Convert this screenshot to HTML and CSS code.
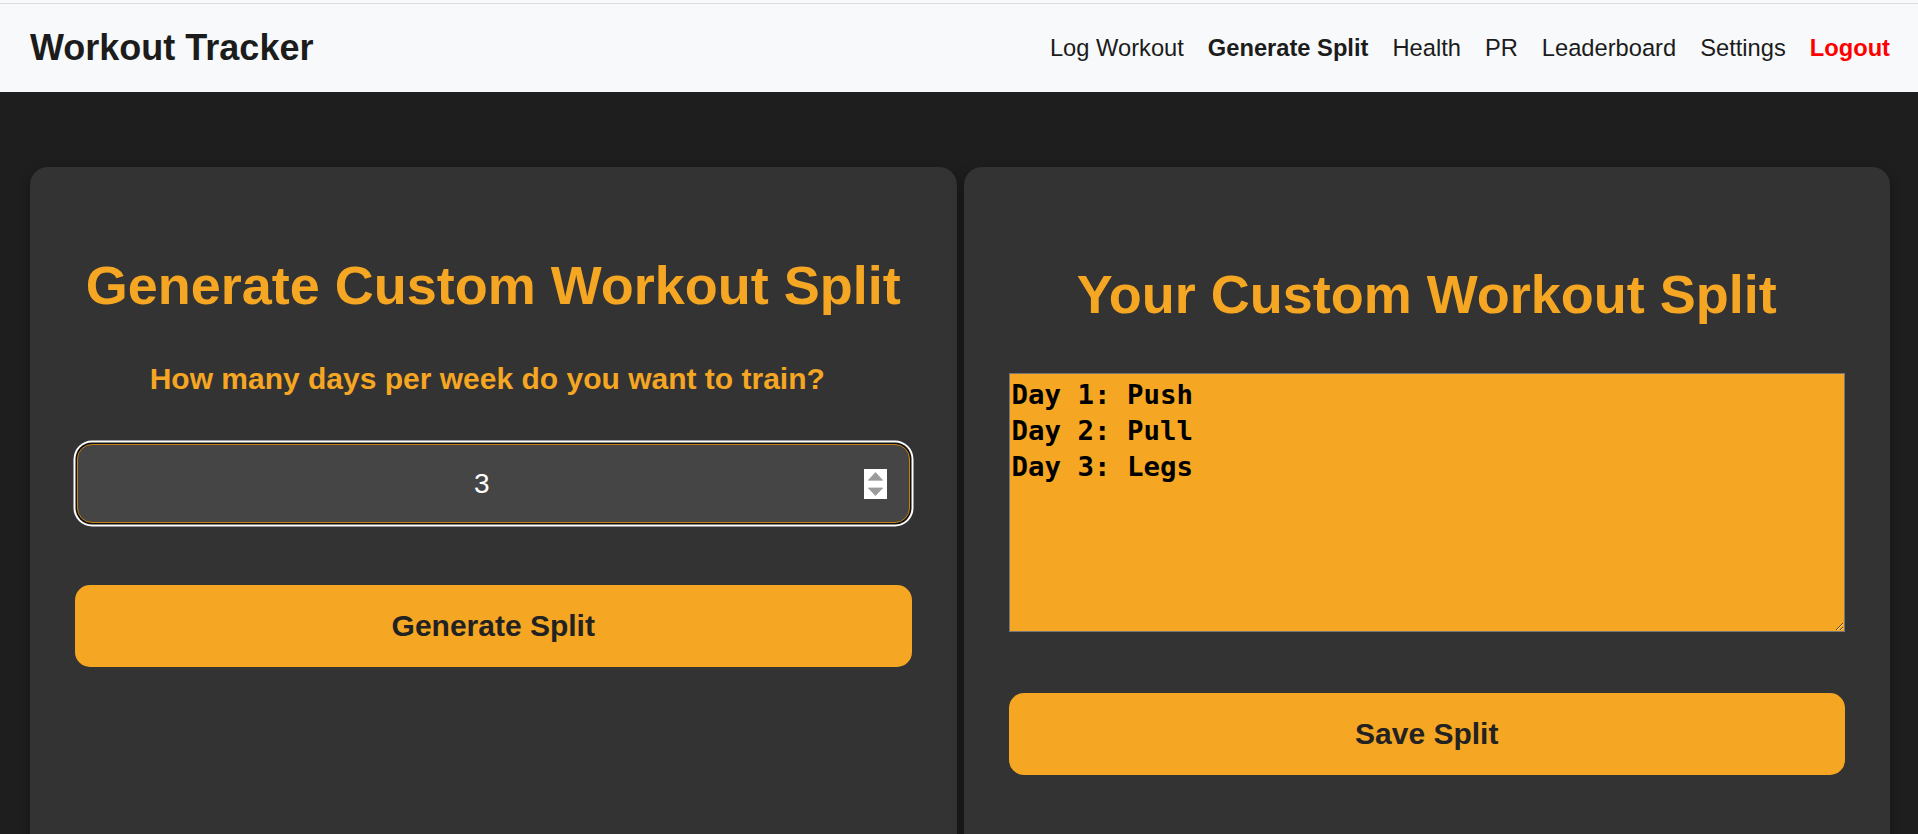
FILE: index.html
```html
<!DOCTYPE html>
<html lang="en">
<head>
<meta charset="utf-8">
<title>Workout Tracker - Generate Split</title>
<link rel="stylesheet" href="styles.css">
</head>
<body>
<nav class="navbar">
  <div class="brand">Workout Tracker</div>
  <ul class="nav-links">
    <li><a href="#" class="nav-link">Log Workout</a></li>
    <li><a href="#" class="nav-link active">Generate Split</a></li>
    <li><a href="#" class="nav-link">Health</a></li>
    <li><a href="#" class="nav-link">PR</a></li>
    <li><a href="#" class="nav-link">Leaderboard</a></li>
    <li><a href="#" class="nav-link">Settings</a></li>
    <li><a href="#" class="nav-link logout">Logout</a></li>
  </ul>
</nav>
<main class="content">
  <section class="card card-generate">
    <h1 class="card-title">Generate Custom Workout Split</h1>
    <label class="question" for="days">How many days per week do you want to train?</label>
    <div class="num-input">
      <input id="days" class="num-value" type="text" value="3">
      <span class="spin">
        <svg width="23" height="30" viewBox="0 0 23 30">
          <rect width="23" height="30" fill="#ffffff"/>
          <path d="M11.5 3.6 L18.6 11.2 L4.4 11.2 Z" fill="#9b9b9b" stroke="#9b9b9b" stroke-width="0.8" stroke-linejoin="round"/>
          <path d="M4.4 19 L18.6 19 L11.5 26.6 Z" fill="#9b9b9b" stroke="#9b9b9b" stroke-width="0.8" stroke-linejoin="round"/>
        </svg>
      </span>
    </div>
    <button class="btn btn-generate" type="button">Generate Split</button>
  </section>
  <section class="card card-result">
    <h1 class="card-title title-result">Your Custom Workout Split</h1>
    <textarea class="split-text">Day 1: Push
Day 2: Pull
Day 3: Legs</textarea>
    <button class="btn btn-save" type="button">Save Split</button>
  </section>
</main>
</body>
</html>
```
FILE: styles.css
```css
html {
  background: #1e1e1e;
}

body {
  margin: 0;
  border-top: 3px solid #f8f9fa;
  font-family: "Liberation Sans", Arial, sans-serif;
  background: #1e1e1e;
  color: #1c1c1c;
}

.navbar {
  display: flex;
  align-items: center;
  justify-content: space-between;
  height: 88px;
  padding: 0 28px 0 30px;
  background: #f8f9fa;
  border-top: 1px solid #dcdcdc;
}

.brand {
  font-size: 36px;
  font-weight: bold;
  color: #1c1c1c;
}

.nav-links {
  display: flex;
  gap: 24px;
  margin: 0;
  padding: 0;
  list-style: none;
}

.nav-link {
  font-size: 23.7px;
  color: #1c1c1c;
  text-decoration: none;
}

.nav-link.active {
  font-weight: bold;
}

.nav-link.logout {
  font-weight: bold;
  color: #ff0000;
}

.content {
  display: grid;
  grid-template-columns: 1fr 1fr;
  gap: 7px;
  padding: 75px 28px 0 30px;
}

.card {
  display: flex;
  flex-direction: column;
  min-height: 700px;
  padding: 87px 45px 40px;
  box-sizing: border-box;
  background: #333333;
  border-radius: 18px;
  box-shadow: 0 4px 12px rgba(0, 0, 0, 0.35);
}

.card-title {
  margin: 0;
  font-size: 54px;
  line-height: 62px;
  font-weight: bold;
  color: #f5a623;
  text-align: center;
}

.title-result {
  margin-top: 9px;
}

.question {
  display: block;
  margin-top: 46px;
  padding-right: 12px;
  font-size: 30px;
  line-height: 34px;
  font-weight: bold;
  color: #f5a623;
  text-align: center;
}

.num-input {
  display: flex;
  align-items: center;
  height: 79px;
  margin: 48px 2px 0;
  padding: 0 22px;
  box-sizing: border-box;
  background: #454545;
  border: 1px solid #c47f10;
  border-radius: 15px;
  box-shadow: 0 0 0 1.5px #111111, 0 0 0 3.5px #ffffff;
}

.num-value {
  flex: 1;
  min-width: 0;
  padding: 0;
  border: none;
  outline: none;
  background: transparent;
  color: #ffffff;
  font-family: "Liberation Sans", Arial, sans-serif;
  font-size: 28px;
  text-align: center;
}

.spin {
  display: flex;
  width: 23px;
  height: 30px;
}

.btn {
  display: block;
  width: 100%;
  height: 82px;
  border: none;
  border-radius: 15px;
  background: #f5a623;
  color: #222222;
  font-family: "Liberation Sans", Arial, sans-serif;
  font-size: 30px;
  font-weight: bold;
}

.btn-generate {
  margin-top: 62px;
}

.split-text {
  display: block;
  width: 100%;
  height: 259px;
  margin-top: 48px;
  padding: 3px 2px 2px;
  box-sizing: border-box;
  border: 1px solid #767676;
  background: #f5a623;
  color: #000000;
  font-family: "DejaVu Sans Mono", "Liberation Mono", monospace;
  font-size: 27.4px;
  line-height: 36px;
  font-weight: bold;
}

.btn-save {
  margin-top: 61px;
}
```
